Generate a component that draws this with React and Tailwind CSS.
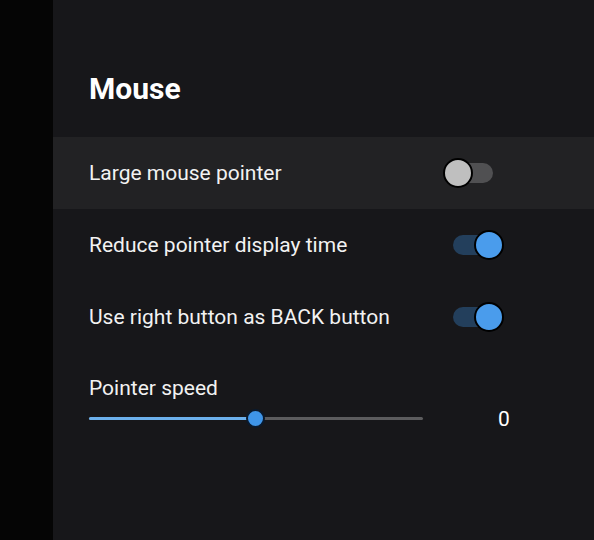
import { useState } from 'react';

const Toggle = ({ on, onClick }) => (
    <button onClick={onClick} className="relative w-[61px] h-[32px] flex items-center">
        <span className={`absolute left-[10px] right-[11px] h-[20px] rounded-full ${on ? 'bg-[#233f5c]' : 'bg-[#505052]'}`} />
        <span
            className={`absolute top-[1px] w-[30px] h-[30px] rounded-full border-2 border-black ${on ? 'left-[31px] bg-[#4a9cec]' : 'left-[0px] bg-[#bfbfbf]'}`}
        />
    </button>
);

const ToggleRow = ({ label, on, onClick, highlighted }) => (
    <div className={`h-[72px] flex items-center pl-[36px] pr-[90px] justify-between ${highlighted ? 'bg-[#222224]' : ''}`}>
        <span className="text-[21px] text-[#f2f2f2] mt-[2px]">{label}</span>
        <Toggle on={on} onClick={onClick} />
    </div>
);

const App = () => {
    const [large, setLarge] = useState(false);
    const [reduce, setReduce] = useState(true);
    const [rightBack, setRightBack] = useState(true);

    return (
        <div className="w-[594px] h-[540px] bg-black flex overflow-hidden" style={{ fontFamily: 'Roboto, "Liberation Sans", sans-serif' }}>
            <div className="w-[53px] shrink-0 bg-[#050505]" />
            <main className="flex-grow bg-[#17171a] flex flex-col">
                <h1 className="pl-[36px] pt-[70px] h-[137px] text-[30px] font-bold text-white leading-[38px]">Mouse</h1>
                <ToggleRow label="Large mouse pointer" on={large} onClick={() => setLarge(!large)} highlighted />
                <ToggleRow label="Reduce pointer display time" on={reduce} onClick={() => setReduce(!reduce)} />
                <ToggleRow label="Use right button as BACK button" on={rightBack} onClick={() => setRightBack(!rightBack)} />
                <div className="pl-[36px] pt-[21px]">
                    <p className="text-[21px] text-[#f2f2f2] leading-[28px]">Pointer speed</p>
                    <div className="flex items-center h-[32px]">
                        <div className="relative w-[334px] h-[3px] bg-[#5c5c5e] rounded-full">
                            <div className="absolute left-0 top-0 h-[3px] w-[166px] bg-[#6cb0ec] rounded-full" />
                            <div className="absolute left-[157px] top-[-8px] w-[19px] h-[19px] rounded-full bg-[#3f95e8] border-2 border-[#0a1a2e]" />
                        </div>
                        <span className="ml-[75px] mt-[4px] text-[21px] text-white">0</span>
                    </div>
                </div>
            </main>
        </div>
    );
};

export default App;
